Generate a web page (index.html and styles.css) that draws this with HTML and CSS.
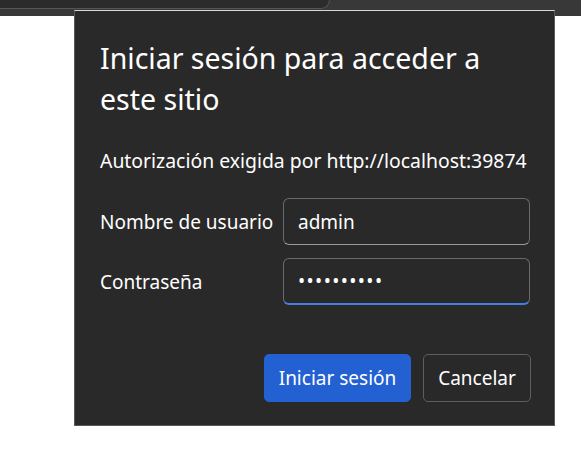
FILE: index.html
```html
<!DOCTYPE html>
<html lang="es">
<head>
<meta charset="utf-8">
<link rel="stylesheet" href="styles.css">
</head>
<body>
<div class="topbar"><div class="tab"></div></div>
<div class="dialog">
  <h1 class="title">Iniciar sesión para acceder a este sitio</h1>
  <p class="origin">Autorización exigida por http://localhost:39874</p>
  <div class="form">
    <label class="label">Nombre de usuario</label>
    <div class="field"><span class="value">admin</span></div>
    <label class="label">Contraseña</label>
    <div class="field focused"><span class="dots">••••••••••</span></div>
  </div>
  <div class="actions">
    <button class="btn primary">Iniciar sesión</button>
    <button class="btn secondary">Cancelar</button>
  </div>
</div>
</body>
</html>
```
FILE: styles.css
```css
html, body {
  margin: 0;
  padding: 0;
  background: #ffffff;
  width: 581px;
  height: 453px;
  overflow: hidden;
  font-family: "Noto Sans", "Open Sans", sans-serif;
}
.topbar {
  height: 16px;
  background: #383838;
  position: relative;
}
.tab {
  width: 330px;
  height: 9px;
  background: #2b2b2b;
  border-bottom: 1px solid #555;
  border-right: 1px solid #555;
  border-bottom-right-radius: 12px;
  box-sizing: border-box;
}
.dialog {
  position: absolute;
  left: 74px;
  top: 10px;
  width: 481px;
  height: 416px;
  box-sizing: border-box;
  background: #292929;
  border: 1px solid #5a5a5a;
  border-top-color: #d8d8d8;
  padding: 0 23px 0 25px;
  color: #ffffff;
}
.title {
  margin: 27px 0 0 0;
  font-size: 28.5px;
  font-weight: 400;
  line-height: 41px;
  width: 420px;
}
.origin {
  margin: 28px 0 0 0;
  font-size: 19.4px;
  line-height: 26px;
  white-space: nowrap;
}
.form {
  margin-top: 24px;
  display: grid;
  grid-template-columns: 183px 247px;
  row-gap: 13px;
  align-items: center;
}
.label {
  font-size: 19px;
  white-space: nowrap;
}
.field {
  height: 47px;
  box-sizing: border-box;
  border: 1px solid #6a6a6a;
  border-bottom-color: #9a9a9a;
  border-radius: 6px;
  display: flex;
  align-items: center;
  padding-left: 14px;
  font-size: 19px;
}
.field.focused {
  border-bottom: 2px solid #3f7fe6;
}
.dots {
  letter-spacing: 1.4px;
  font-size: 19px;
}
.actions {
  margin-top: 49px;
  display: flex;
  justify-content: flex-end;
  gap: 12px;
}
.btn {
  height: 48px;
  border-radius: 5px;
  font-family: inherit;
  font-size: 19px;
  color: #ffffff;
  padding: 0 10px;
}
.primary {
  background: #2360d2;
  border: 1px solid #2360d2;
  width: 147px;
}
.secondary {
  background: #292929;
  border: 1px solid #5e5e5e;
  width: 108px;
}
```
